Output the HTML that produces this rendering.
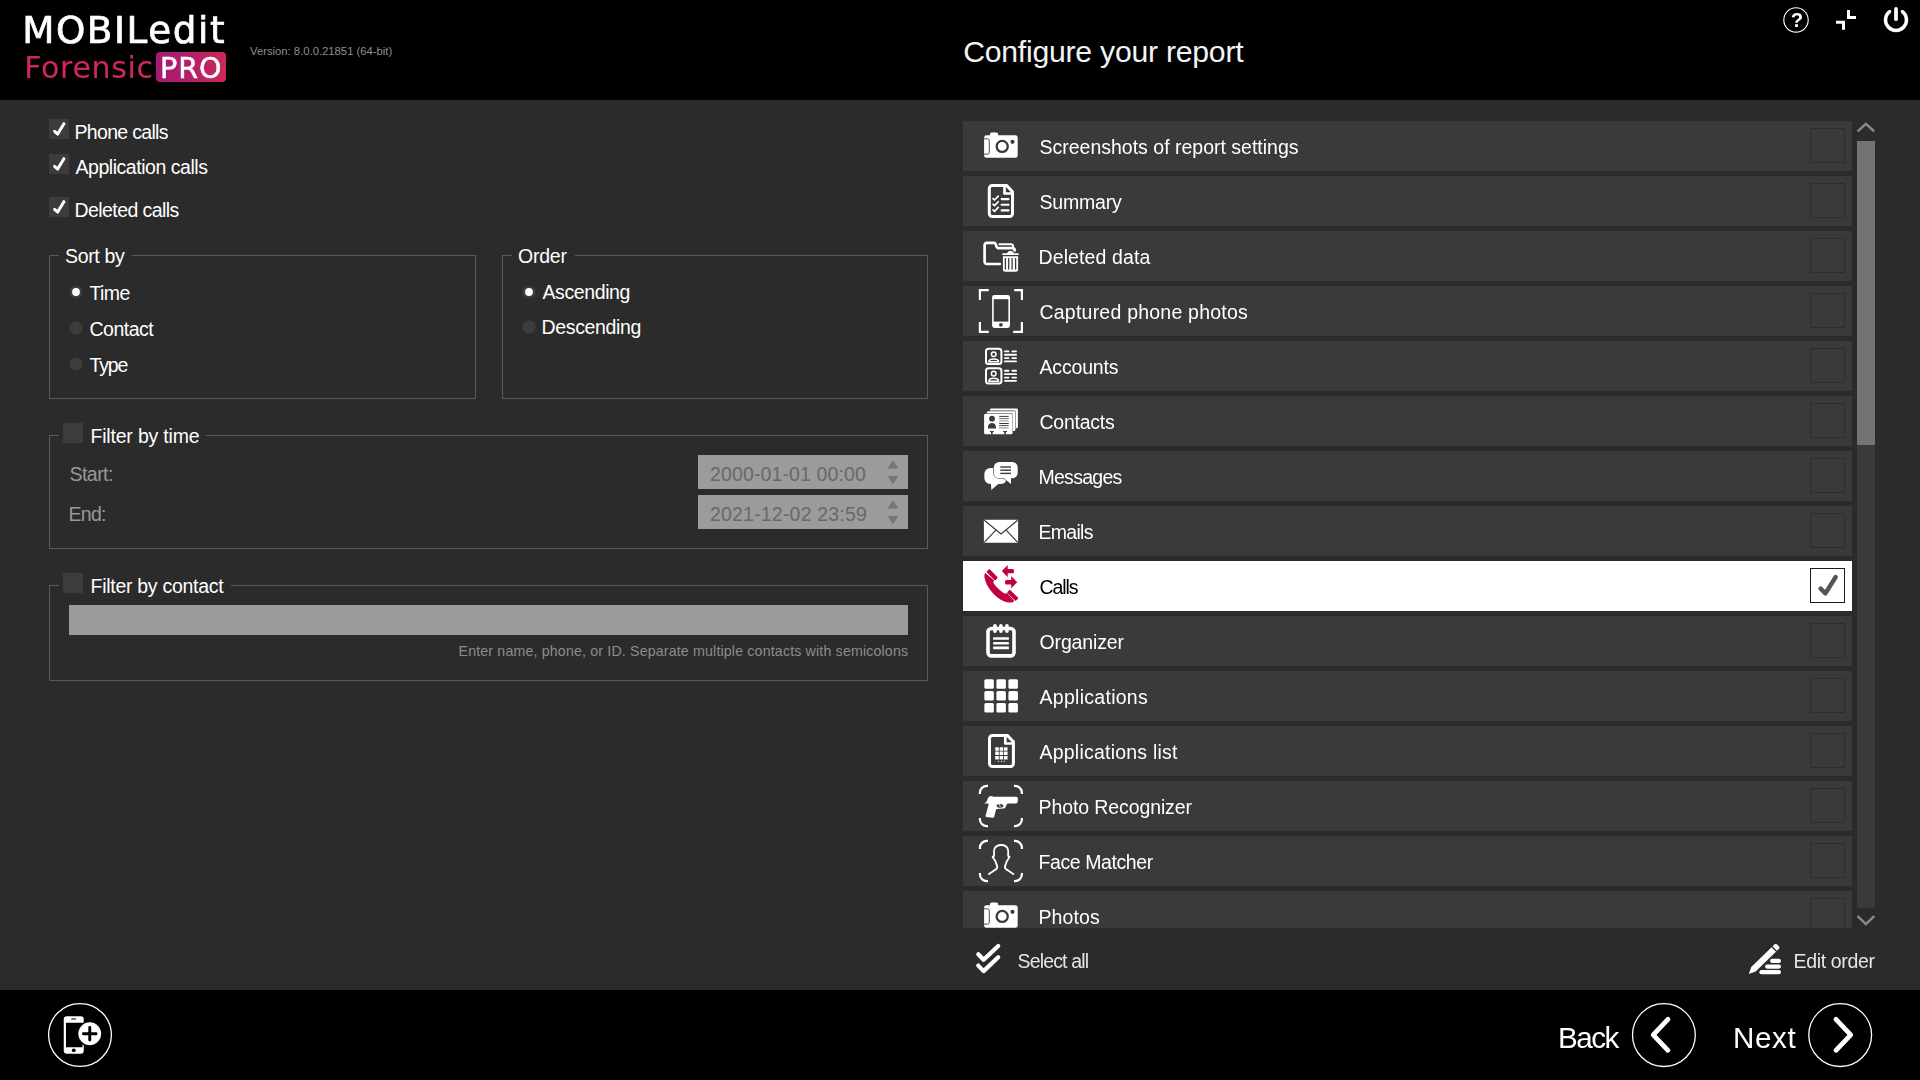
<!DOCTYPE html>
<html lang="en"><head><meta charset="utf-8"><title>MOBILedit Forensic PRO - Configure your report</title>
<style>
html,body{margin:0;padding:0;background:#2b2b2b;overflow:hidden}
body{width:1920px;height:1080px;position:relative;font-family:"Liberation Sans", sans-serif;}
.t{position:absolute;white-space:nowrap;font-family:"Liberation Sans", sans-serif}
#list{position:absolute;left:963px;top:121px;width:889px;height:807px;overflow:hidden;will-change:transform}
#g{position:absolute;left:0;top:0;width:0;height:0;will-change:transform}
.row{position:absolute;left:0;width:889px;height:50px;background:#3a3a3a}
.row.sel{background:#fff}
.cb{position:absolute;left:847px;top:7px;width:33px;height:33px;border:1px solid #2d2d2d}
.row.sel .cb{border-color:#1a1a1a}
svg{overflow:visible}
</style></head><body>
<div style="position:absolute;left:0px;top:0px;width:1920px;height:100px;background:#000"></div><div style="position:absolute;left:0px;top:990px;width:1920px;height:90px;background:#000"></div><div style="position:absolute;left:49px;top:119px;width:20px;height:20px;background:#3c3c3c"></div><svg style="position:absolute;left:49px;top:119px" width="20" height="20" viewBox="0 0 20 20"><path d="M5.6 12.3 L8.7 15.1 L14.9 4.7" fill="none" stroke="#fff" stroke-width="3" stroke-linecap="round" stroke-linejoin="round"/></svg><div style="position:absolute;left:49px;top:154px;width:20px;height:20px;background:#3c3c3c"></div><svg style="position:absolute;left:49px;top:154px" width="20" height="20" viewBox="0 0 20 20"><path d="M5.6 12.3 L8.7 15.1 L14.9 4.7" fill="none" stroke="#fff" stroke-width="3" stroke-linecap="round" stroke-linejoin="round"/></svg><div style="position:absolute;left:49px;top:197px;width:20px;height:20px;background:#3c3c3c"></div><svg style="position:absolute;left:49px;top:197px" width="20" height="20" viewBox="0 0 20 20"><path d="M5.6 12.3 L8.7 15.1 L14.9 4.7" fill="none" stroke="#fff" stroke-width="3" stroke-linecap="round" stroke-linejoin="round"/></svg><div style="position:absolute;left:49px;top:255px;width:1px;height:144px;background:#5a5a5a"></div><div style="position:absolute;left:475px;top:255px;width:1px;height:144px;background:#5a5a5a"></div><div style="position:absolute;left:49px;top:398px;width:427px;height:1px;background:#5a5a5a"></div><div style="position:absolute;left:49px;top:255px;width:10px;height:1px;background:#5a5a5a"></div><div style="position:absolute;left:132px;top:255px;width:344px;height:1px;background:#5a5a5a"></div><div style="position:absolute;left:502px;top:255px;width:1px;height:144px;background:#5a5a5a"></div><div style="position:absolute;left:927px;top:255px;width:1px;height:144px;background:#5a5a5a"></div><div style="position:absolute;left:502px;top:398px;width:426px;height:1px;background:#5a5a5a"></div><div style="position:absolute;left:502px;top:255px;width:10px;height:1px;background:#5a5a5a"></div><div style="position:absolute;left:575px;top:255px;width:353px;height:1px;background:#5a5a5a"></div><svg style="position:absolute;left:68.1px;top:284.1px" width="16" height="16" viewBox="0 0 16 16"><circle cx="8" cy="8" r="6.6" fill="#3c3c3c"/><circle cx="8" cy="8" r="3.9" fill="#fff"/></svg><svg style="position:absolute;left:68.1px;top:320.1px" width="16" height="16" viewBox="0 0 16 16"><circle cx="8" cy="8" r="6.6" fill="#3c3c3c"/></svg><svg style="position:absolute;left:68.1px;top:356.1px" width="16" height="16" viewBox="0 0 16 16"><circle cx="8" cy="8" r="6.6" fill="#3c3c3c"/></svg><svg style="position:absolute;left:521.1px;top:283.6px" width="16" height="16" viewBox="0 0 16 16"><circle cx="8" cy="8" r="6.6" fill="#3c3c3c"/><circle cx="8" cy="8" r="3.9" fill="#fff"/></svg><svg style="position:absolute;left:521.1px;top:318.6px" width="16" height="16" viewBox="0 0 16 16"><circle cx="8" cy="8" r="6.6" fill="#3c3c3c"/></svg><div style="position:absolute;left:49px;top:435px;width:1px;height:114px;background:#5a5a5a"></div><div style="position:absolute;left:927px;top:435px;width:1px;height:114px;background:#5a5a5a"></div><div style="position:absolute;left:49px;top:548px;width:879px;height:1px;background:#5a5a5a"></div><div style="position:absolute;left:49px;top:435px;width:10px;height:1px;background:#5a5a5a"></div><div style="position:absolute;left:206px;top:435px;width:722px;height:1px;background:#5a5a5a"></div><div style="position:absolute;left:63px;top:423px;width:20px;height:20px;background:#3c3c3c"></div><div style="position:absolute;left:698px;top:455px;width:210px;height:34px;background:#9b9b9b"></div><div style="position:absolute;left:698px;top:495px;width:210px;height:34px;background:#9b9b9b"></div><svg style="position:absolute;left:886.5px;top:459.5px" width="12" height="26" viewBox="0 0 12 26"><path d="M6 0.3 L11.5 8.6 L0.5 8.6 Z M6 24.4 L11.4 16 L0.6 16 Z" fill="#757575"/></svg><svg style="position:absolute;left:886.5px;top:499.5px" width="12" height="26" viewBox="0 0 12 26"><path d="M6 0.3 L11.5 8.6 L0.5 8.6 Z M6 24.4 L11.4 16 L0.6 16 Z" fill="#757575"/></svg><div style="position:absolute;left:49px;top:585px;width:1px;height:96px;background:#5a5a5a"></div><div style="position:absolute;left:927px;top:585px;width:1px;height:96px;background:#5a5a5a"></div><div style="position:absolute;left:49px;top:680px;width:879px;height:1px;background:#5a5a5a"></div><div style="position:absolute;left:49px;top:585px;width:10px;height:1px;background:#5a5a5a"></div><div style="position:absolute;left:231px;top:585px;width:697px;height:1px;background:#5a5a5a"></div><div style="position:absolute;left:63px;top:573px;width:20px;height:20px;background:#3c3c3c"></div><div style="position:absolute;left:69px;top:605px;width:839px;height:30px;background:#9b9b9b"></div><div style="position:absolute;left:1857px;top:141px;width:18px;height:767px;background:#3a3a3a"></div><div style="position:absolute;left:1857px;top:141px;width:18px;height:304px;background:#737373"></div><svg style="position:absolute;left:1855px;top:120px" width="22" height="14" viewBox="0 0 22 14"><path d="M2.6 11.4 L10.9 3.9 L19.2 11.4" fill="none" stroke="#8a8a8a" stroke-width="2.5"/></svg><svg style="position:absolute;left:1855px;top:913px" width="22" height="14" viewBox="0 0 22 14"><path d="M2.6 3.2 L10.9 11.1 L19.2 3.2" fill="none" stroke="#8a8a8a" stroke-width="2.5"/></svg>
<div style="position:absolute;left:156px;top:52px;width:70px;height:30px;border-radius:4px;background:linear-gradient(90deg,#a51a74 0%,#b31f6a 50%,#cb295a 100%)"></div>
<svg style="position:absolute;left:1770px;top:0px" width="150" height="45" viewBox="0 0 150 45"><circle cx="26" cy="19.9" r="12.2" fill="none" stroke="#fff" stroke-width="1.1"/><path d="M78.5 10 V17.4 H86 M66 22.2 H73.5 V29.7" fill="none" stroke="#fff" stroke-width="3"/><path d="M119.6 11.6 A10.5 10.5 0 1 0 132.4 11.6" fill="none" stroke="#fff" stroke-width="3.5" stroke-linecap="round"/><path d="M126 8.8 V19.2" fill="none" stroke="#fff" stroke-width="3.7" stroke-linecap="round"/></svg>
<div id="list">
<div class="row" style="top:0px"><i class="cb"></i></div><div class="row" style="top:55px"><i class="cb"></i></div><div class="row" style="top:110px"><i class="cb"></i></div><div class="row" style="top:165px"><i class="cb"></i></div><div class="row" style="top:220px"><i class="cb"></i></div><div class="row" style="top:275px"><i class="cb"></i></div><div class="row" style="top:330px"><i class="cb"></i></div><div class="row" style="top:385px"><i class="cb"></i></div><div class="row sel" style="top:440px"><i class="cb"></i><svg style="position:absolute;left:847px;top:7px" width="35" height="35" viewBox="0 0 35 35"><path d="M10.6 20.6 L15.4 25.4 L25.7 9" fill="none" stroke="#555" stroke-width="4.4" stroke-linecap="round" stroke-linejoin="round"/></svg></div><div class="row" style="top:495px"><i class="cb"></i></div><div class="row" style="top:550px"><i class="cb"></i></div><div class="row" style="top:605px"><i class="cb"></i></div><div class="row" style="top:660px"><i class="cb"></i></div><div class="row" style="top:715px"><i class="cb"></i></div><div class="row" style="top:770px"><i class="cb"></i></div>
<svg style="position:absolute;left:7px;top:0px" width="64" height="50" viewBox="0 0 64 50"><path d="M16.4 14.35 H19.9 V13.4 A1.8 1.8 0 0 1 21.7 11.6 H26.4 A1.8 1.8 0 0 1 28.2 13.4 V14.35 H45.4 A2.3 2.3 0 0 1 47.7 16.65 V34.5 A2.3 2.3 0 0 1 45.4 36.8 H16.4 A2.3 2.3 0 0 1 14.1 34.5 V16.65 A2.3 2.3 0 0 1 16.4 14.35 Z" fill="#fff"/><path d="M14.1 17.8 H17.3 A2 2 0 0 1 19.3 19.8 V31.2 A2 2 0 0 1 17.3 33.2 H14.1" fill="none" stroke="#3a3a3a" stroke-width="0.9"/><circle cx="32.2" cy="25.4" r="5.55" fill="none" stroke="#3a3a3a" stroke-width="2.3"/><circle cx="42.5" cy="20.8" r="2.1" fill="#3a3a3a"/></svg><svg style="position:absolute;left:7px;top:55px" width="64" height="50" viewBox="0 0 64 50"><path d="M22.3 9.4 H36.5 L42.5 15.7 V37.6 A3 3 0 0 1 39.5 40.6 H22.3 A3 3 0 0 1 19.3 37.6 V12.4 A3 3 0 0 1 22.3 9.4 Z" fill="none" stroke="#fff" stroke-width="3" stroke-linejoin="round"/><path d="M34.5 10.5 V17.5 H41.5" fill="none" stroke="#fff" stroke-width="2.7" stroke-linejoin="round"/><path d="M23 22.60 L24.5 24.00 L28.3 20.10" fill="none" stroke="#fff" stroke-width="1.7" stroke-linecap="round" stroke-linejoin="round"/><path d="M31.6 23.10 H38.6" stroke="#fff" stroke-width="2.1" stroke-linecap="round"/><path d="M23 28.25 L24.5 29.65 L28.3 25.75" fill="none" stroke="#fff" stroke-width="1.7" stroke-linecap="round" stroke-linejoin="round"/><path d="M31.6 28.75 H38.6" stroke="#fff" stroke-width="2.1" stroke-linecap="round"/><path d="M23 33.90 L24.5 35.30 L28.3 31.40" fill="none" stroke="#fff" stroke-width="1.7" stroke-linecap="round" stroke-linejoin="round"/><path d="M31.6 34.40 H38.6" stroke="#fff" stroke-width="2.1" stroke-linecap="round"/></svg><svg style="position:absolute;left:7px;top:110px" width="64" height="50" viewBox="0 0 64 50"><path d="M29.8 33 H16.8 A2.2 2.2 0 0 1 14.6 30.8 V14 A2.2 2.2 0 0 1 16.8 11.8 H24.2 C26.6 11.8 25.6 17.1 28.4 17.1 H42.4 A2.3 2.3 0 0 1 44.7 19.4" fill="none" stroke="#fff" stroke-width="2.7" stroke-linecap="round" stroke-linejoin="round"/><path d="M29.4 13.3 H40.8 A2.3 2.3 0 0 1 43.1 15.6 V16.4" fill="none" stroke="#fff" stroke-width="2" stroke-linecap="round"/><path d="M33.1 22.2 H37.2 C37.8 20.6 38.8 20.1 40.5 20.1 C42.2 20.1 43.2 20.6 43.8 22.2 H47.9 A0.9 0.9 0 0 1 48.8 23.1 V24.1 H32.2 V23.1 A0.9 0.9 0 0 1 33.1 22.2 Z" fill="#fff"/><path d="M32.9 25.2 H48.1 V38.2 A2.5 2.5 0 0 1 45.6 40.7 H35.4 A2.5 2.5 0 0 1 32.9 38.2 Z" fill="#fff"/><rect x="34.75" y="26.9" width="1.3" height="11.8" rx="0.6" fill="#3a3a3a"/><rect x="38.05" y="26.9" width="1.3" height="11.8" rx="0.6" fill="#3a3a3a"/><rect x="41.45" y="26.9" width="1.3" height="11.8" rx="0.6" fill="#3a3a3a"/><rect x="44.95" y="26.9" width="1.3" height="11.8" rx="0.6" fill="#3a3a3a"/></svg><svg style="position:absolute;left:7px;top:165px" width="64" height="50" viewBox="0 0 64 50"><path d="M9.9 14.1 V4.1 H18.8 M44.2 4.1 H51.9 V14.1 M51.9 35.9 V45.9 H43.2 M18.8 45.9 H9.9 V35.9" fill="none" stroke="#fff" stroke-width="2.2"/><rect x="22.1" y="9" width="17.9" height="32.9" rx="2.3" fill="#fff"/><rect x="23.7" y="13.2" width="14.7" height="22.4" fill="#3a3a3a"/><circle cx="30.9" cy="38.8" r="1.9" fill="#3a3a3a"/></svg><svg style="position:absolute;left:7px;top:220px" width="64" height="50" viewBox="0 0 64 50"><rect x="16" y="7.70" width="15.4" height="15.4" rx="2.6" fill="none" stroke="#fff" stroke-width="2"/><circle cx="23.7" cy="13.20" r="2.3" fill="none" stroke="#fff" stroke-width="1.5"/><path d="M18.8 20.80 C18.8 16.90 28.6 16.90 28.6 20.80 Z" fill="none" stroke="#fff" stroke-width="1.5" stroke-linejoin="round"/><path d="M34.9 10.30 H38.5 M42.3 10.30 H46.1" stroke="#fff" stroke-width="1.8" stroke-linecap="round"/><path d="M34.9 13.75 H46.1" stroke="#fff" stroke-width="1.8" stroke-linecap="round"/><path d="M34.9 17.10 H38.5 M42.3 17.10 H46.1" stroke="#fff" stroke-width="1.8" stroke-linecap="round"/><path d="M34.9 20.40 H46.1" stroke="#fff" stroke-width="1.8" stroke-linecap="round"/><rect x="16" y="27.15" width="15.4" height="15.4" rx="2.6" fill="none" stroke="#fff" stroke-width="2"/><circle cx="23.7" cy="32.65" r="2.3" fill="none" stroke="#fff" stroke-width="1.5"/><path d="M18.8 40.25 C18.8 36.35 28.6 36.35 28.6 40.25 Z" fill="none" stroke="#fff" stroke-width="1.5" stroke-linejoin="round"/><path d="M34.9 29.75 H38.5 M42.3 29.75 H46.1" stroke="#fff" stroke-width="1.8" stroke-linecap="round"/><path d="M34.9 33.20 H46.1" stroke="#fff" stroke-width="1.8" stroke-linecap="round"/><path d="M34.9 36.55 H38.5 M42.3 36.55 H46.1" stroke="#fff" stroke-width="1.8" stroke-linecap="round"/><path d="M34.9 39.85 H46.1" stroke="#fff" stroke-width="1.8" stroke-linecap="round"/></svg><svg style="position:absolute;left:7px;top:275px" width="64" height="50" viewBox="0 0 64 50"><rect x="19.9" y="12.5" width="28" height="19.7" rx="1.4" fill="#fff"/><rect x="16.5" y="14.6" width="29.3" height="20.8" rx="1.6" fill="#3a3a3a"/><rect x="16.9" y="15.2" width="28.5" height="19.8" rx="1.4" fill="#fff"/><rect x="13.7" y="17.2" width="29.3" height="21.4" rx="1.8" fill="#3a3a3a"/><rect x="14.1" y="17.8" width="28.5" height="20.4" rx="1.5" fill="#fff"/><circle cx="22" cy="22.7" r="2.9" fill="#3a3a3a"/><path d="M18 32.4 V31.2 C18 25.7 25.9 25.7 25.9 31.2 V32.4 Z" fill="#3a3a3a"/><rect x="29.2" y="19.90" width="9.5" height="1" fill="#3a3a3a" opacity="1"/><rect x="29.2" y="22.10" width="9.5" height="1" fill="#3a3a3a" opacity="0.75"/><rect x="29.2" y="24.40" width="9.5" height="1" fill="#3a3a3a" opacity="0.55"/><rect x="29.2" y="27.00" width="9.5" height="1" fill="#3a3a3a" opacity="1"/><rect x="29.2" y="29.10" width="9.5" height="1" fill="#3a3a3a" opacity="0.9"/><rect x="29.2" y="31.40" width="9.5" height="1" fill="#3a3a3a" opacity="0.6"/><path d="M19.9 34.9 H23.8 V35.9 H22.7 V38.3 H21.0 V35.9 H19.9 Z" fill="#3a3a3a"/><path d="M33.1 34.9 H37.0 V35.9 H35.9 V38.3 H34.2 V35.9 H33.1 Z" fill="#3a3a3a"/></svg><svg style="position:absolute;left:7px;top:330px" width="64" height="50" viewBox="0 0 64 50"><path d="M20.3 16.9 H31 A6 6 0 0 1 37 22.9 V27.1 A6 6 0 0 1 31 33.1 H28.2 L21.3 39.1 L21 33.1 H20.3 A6 6 0 0 1 14.35 27.1 V22.9 A6 6 0 0 1 20.3 16.9 Z" fill="#fff"/><path d="M29.3 10.9 H42.2 A5.5 5.5 0 0 1 47.7 16.4 V21.8 A5.5 5.5 0 0 1 42.2 27.3 H41 V33.1 L33.8 27.3 H29.3 A5.5 5.5 0 0 1 23.8 21.8 V16.4 A5.5 5.5 0 0 1 29.3 10.9 Z" fill="#fff" stroke="#3a3a3a" stroke-width="1.1" paint-order="stroke"/><rect x="30.3" y="15.30" width="10.7" height="1.4" fill="#3a3a3a"/><rect x="30.3" y="18.45" width="10.7" height="1.4" fill="#3a3a3a"/><rect x="30.3" y="21.70" width="10.7" height="1.4" fill="#3a3a3a"/></svg><svg style="position:absolute;left:7px;top:385px" width="64" height="50" viewBox="0 0 64 50"><rect x="13.9" y="13.7" width="34.2" height="23.1" rx="0.6" fill="#fff"/><path d="M14.3 14.3 L31 27.9 L47.7 14.3 M14.3 36.3 L25.8 24.1 M47.7 36.3 L36.2 24.1" fill="none" stroke="#3a3a3a" stroke-width="1.2"/></svg><svg style="position:absolute;left:7px;top:440px" width="64" height="50" viewBox="0 0 64 50"><path d="M15.2 12 L24.2 19.4 C22.9 20.6 23.2 22 24.5 23.6 C27 27 30.5 30.2 33.6 32.1 C35 32.9 36 32.7 36.9 31.9 L44 39.5 C44.3 40.2 43.5 40.9 42.3 41.2 C38 42.1 32.5 40.5 27.2 36.2 C20.5 30.7 15.6 23 14.5 16.5 C14.2 14.5 14.5 12.8 15.2 12 Z" fill="#c0003f"/><rect x="0" y="0" width="12.2" height="4.3" rx="0.9" transform="translate(19.4 7.9) rotate(45)" fill="#c0003f"/><rect x="0" y="0" width="12.2" height="4.3" rx="0.9" transform="translate(39.8 28.6) rotate(44)" fill="#c0003f"/><path d="M31.9 10.1 L37.7 3.9 V7.9 H42.4 A1.6 1.6 0 0 1 44 9.5 V10.7 A1.6 1.6 0 0 1 42.4 12.3 H37.7 V16.2 Z" fill="#c0003f"/><path d="M47.2 21.3 L41.2 15 V19 H36.6 A1.6 1.6 0 0 0 35 20.6 V22 A1.6 1.6 0 0 0 36.6 23.6 H41.2 V27.3 Z" fill="#c0003f"/></svg><svg style="position:absolute;left:7px;top:495px" width="64" height="50" viewBox="0 0 64 50"><rect x="18" y="12.45" width="26" height="27.45" rx="3.4" fill="none" stroke="#fff" stroke-width="3.6"/><rect x="23.15" y="8.1" width="3.7" height="8.8" rx="1.85" fill="#fff"/><rect x="29.05" y="8.1" width="3.7" height="8.8" rx="1.85" fill="#fff"/><rect x="35.05" y="8.1" width="3.7" height="8.8" rx="1.85" fill="#fff"/><rect x="23.1" y="21.20" width="15.8" height="2.6" rx="0.5" fill="#fff"/><rect x="23.1" y="25.90" width="15.8" height="2.6" rx="0.5" fill="#fff"/><rect x="23.1" y="30.60" width="15.8" height="2.6" rx="0.5" fill="#fff"/></svg><svg style="position:absolute;left:7px;top:550px" width="64" height="50" viewBox="0 0 64 50"><rect x="14.35" y="8.2" width="9.5" height="9.45" rx="1.5" fill="#fff"/><rect x="26.4" y="8.2" width="9.5" height="9.45" rx="1.5" fill="#fff"/><rect x="38.4" y="8.2" width="9.5" height="9.45" rx="1.5" fill="#fff"/><rect x="14.35" y="20.1" width="9.5" height="9.45" rx="1.5" fill="#fff"/><rect x="26.4" y="20.1" width="9.5" height="9.45" rx="1.5" fill="#fff"/><rect x="38.4" y="20.1" width="9.5" height="9.45" rx="1.5" fill="#fff"/><rect x="14.35" y="32.0" width="9.5" height="9.45" rx="1.5" fill="#fff"/><rect x="26.4" y="32.0" width="9.5" height="9.45" rx="1.5" fill="#fff"/><rect x="38.4" y="32.0" width="9.5" height="9.45" rx="1.5" fill="#fff"/></svg><svg style="position:absolute;left:7px;top:605px" width="64" height="50" viewBox="0 0 64 50"><path d="M22.5 9.4 H37.3 L43.4 15.8 V37.6 A3 3 0 0 1 40.4 40.6 H22.5 A3 3 0 0 1 19.5 37.6 V12.4 A3 3 0 0 1 22.5 9.4 Z" fill="none" stroke="#fff" stroke-width="3" stroke-linejoin="round"/><path d="M35.3 10.5 V17.5 H42.3" fill="none" stroke="#fff" stroke-width="2.7" stroke-linejoin="round"/><rect x="25.2" y="21.2" width="3.6" height="3.5" rx="0.5" fill="#fff"/><rect x="29.6" y="21.2" width="3.6" height="3.5" rx="0.5" fill="#fff"/><rect x="34.0" y="21.2" width="3.6" height="3.5" rx="0.5" fill="#fff"/><rect x="25.2" y="25.6" width="3.6" height="3.5" rx="0.5" fill="#fff"/><rect x="29.6" y="25.6" width="3.6" height="3.5" rx="0.5" fill="#fff"/><rect x="34.0" y="25.6" width="3.6" height="3.5" rx="0.5" fill="#fff"/><rect x="25.2" y="30.0" width="3.6" height="3.5" rx="0.5" fill="#fff"/><rect x="29.6" y="30.0" width="3.6" height="3.5" rx="0.5" fill="#fff"/><rect x="34.0" y="30.0" width="3.6" height="3.5" rx="0.5" fill="#fff"/><rect x="27.90" y="34.8" width="1.2" height="1.2" fill="#fff" opacity="0.8"/><rect x="30.90" y="34.8" width="1.2" height="1.2" fill="#fff" opacity="0.8"/><rect x="33.80" y="34.8" width="1.2" height="1.2" fill="#fff" opacity="0.8"/></svg><svg style="position:absolute;left:7px;top:660px" width="64" height="50" viewBox="0 0 64 50"><path d="M9.9 13 V11.8 A7 7 0 0 1 16.9 4.8 H18 M44 4.8 H44.9 A7 7 0 0 1 51.9 11.8 V13 M51.9 37 V38.2 A7 7 0 0 1 44.9 45.2 H44 M18 45.2 H16.9 A7 7 0 0 1 9.9 38.2 V37" fill="none" stroke="#fff" stroke-width="2.2"/><path d="M19.2 15.9 L20 15 L22.5 15.3 L23 15.8 H45.8 C47.3 15.8 47.9 16.6 47.9 18 V20 C47.9 21.5 46.8 22.6 45.3 22.6 H37.6 C36.6 23.2 36.2 25 35.3 26.6 C34.9 27.4 34.3 27.6 33.5 27.6 L27 27.9 C26.4 28 26.2 28.3 26 29 L24.2 35.8 C24 36.5 23.6 36.8 22.8 36.7 L16.3 35.9 C15.6 35.8 15.4 35.3 15.6 34.6 L18.6 23.6 C18.8 22.9 18.4 22.6 17.6 22.6 L14.1 22.5 C15.5 21.6 16.6 20.6 17 19.4 L17.6 18.6 L17.3 18 L18 17.4 L17.8 16.8 Z" fill="#fff"/><ellipse cx="30" cy="24.8" rx="3.4" ry="1.9" fill="#3a3a3a"/><path d="M29.3 23.2 L30.3 25.9" stroke="#fff" stroke-width="0.9" fill="none"/></svg><svg style="position:absolute;left:7px;top:715px" width="64" height="50" viewBox="0 0 64 50"><path d="M9.9 13 V11.8 A7 7 0 0 1 16.9 4.8 H18 M44 4.8 H44.9 A7 7 0 0 1 51.9 11.8 V13 M51.9 37 V38.2 A7 7 0 0 1 44.9 45.2 H44 M18 45.2 H16.9 A7 7 0 0 1 9.9 38.2 V37" fill="none" stroke="#fff" stroke-width="2.2"/><path d="M18.3 38.4 L25.6 33.6 C27.3 32.6 27.6 31 26.9 29.4 C26.3 28 25.9 27 25.6 25.8 C25.2 24.4 24 23.4 23.3 21.9 C22.6 21 22.5 20.4 23 20.4 C23.8 20.6 24.2 20.2 24.1 18.6 C23.9 16.8 23.7 14.8 24.3 13.3 C25.3 10.6 28.3 9 31.2 9 C34.1 9 37 10.6 37.9 13.3 C38.5 14.8 38.2 16.8 38.1 18.6 C38 20.2 38.3 20.6 39.2 20.4 C39.6 20.4 39.6 21 38.9 21.9 C38.2 23.4 37 24.4 36.6 25.8 C36.3 27 35.9 28 35.3 29.4 C34.6 31 34.9 32.6 36.6 33.6 L44 38.4" fill="none" stroke="#fff" stroke-width="1.8" stroke-linecap="butt" stroke-linejoin="round"/></svg><svg style="position:absolute;left:7px;top:770px" width="64" height="50" viewBox="0 0 64 50"><path d="M16.4 14.35 H19.9 V13.4 A1.8 1.8 0 0 1 21.7 11.6 H26.4 A1.8 1.8 0 0 1 28.2 13.4 V14.35 H45.4 A2.3 2.3 0 0 1 47.7 16.65 V34.5 A2.3 2.3 0 0 1 45.4 36.8 H16.4 A2.3 2.3 0 0 1 14.1 34.5 V16.65 A2.3 2.3 0 0 1 16.4 14.35 Z" fill="#fff"/><path d="M14.1 17.8 H17.3 A2 2 0 0 1 19.3 19.8 V31.2 A2 2 0 0 1 17.3 33.2 H14.1" fill="none" stroke="#3a3a3a" stroke-width="0.9"/><circle cx="32.2" cy="25.4" r="5.55" fill="none" stroke="#3a3a3a" stroke-width="2.3"/><circle cx="42.5" cy="20.8" r="2.1" fill="#3a3a3a"/></svg>
<span class="t" style="left:76.50px;top:17.00px;font-size:19.5px;line-height:19.5px;letter-spacing:-0.002px;color:#fff">Screenshots of report settings</span><span class="t" style="left:76.50px;top:72.00px;font-size:19.5px;line-height:19.5px;letter-spacing:-0.196px;color:#fff">Summary</span><span class="t" style="left:75.50px;top:127.00px;font-size:19.5px;line-height:19.5px;letter-spacing:0.115px;color:#fff">Deleted data</span><span class="t" style="left:76.50px;top:182.00px;font-size:19.5px;line-height:19.5px;letter-spacing:0.221px;color:#fff">Captured phone photos</span><span class="t" style="left:76.50px;top:237.00px;font-size:19.5px;line-height:19.5px;letter-spacing:-0.173px;color:#fff">Accounts</span><span class="t" style="left:76.50px;top:292.00px;font-size:19.5px;line-height:19.5px;letter-spacing:-0.243px;color:#fff">Contacts</span><span class="t" style="left:75.50px;top:347.00px;font-size:19.5px;line-height:19.5px;letter-spacing:-0.732px;color:#fff">Messages</span><span class="t" style="left:75.50px;top:402.00px;font-size:19.5px;line-height:19.5px;letter-spacing:-0.702px;color:#fff">Emails</span><span class="t" style="left:76.50px;top:457.00px;font-size:19.5px;line-height:19.5px;letter-spacing:-1.085px;color:#000">Calls</span><span class="t" style="left:76.50px;top:512.00px;font-size:19.5px;line-height:19.5px;letter-spacing:-0.140px;color:#fff">Organizer</span><span class="t" style="left:76.50px;top:567.00px;font-size:19.5px;line-height:19.5px;letter-spacing:0.282px;color:#fff">Applications</span><span class="t" style="left:76.50px;top:622.00px;font-size:19.5px;line-height:19.5px;letter-spacing:0.220px;color:#fff">Applications list</span><span class="t" style="left:75.50px;top:677.00px;font-size:19.5px;line-height:19.5px;letter-spacing:-0.101px;color:#fff">Photo Recognizer</span><span class="t" style="left:75.50px;top:732.00px;font-size:19.5px;line-height:19.5px;letter-spacing:-0.406px;color:#fff">Face Matcher</span><span class="t" style="left:75.50px;top:787.00px;font-size:19.5px;line-height:19.5px;letter-spacing:0.108px;color:#fff">Photos</span>
</div>
<span class="t" style="left:250.00px;top:46.00px;font-size:11.3px;line-height:11.3px;letter-spacing:-0.011px;color:#8e8e8e">Version: 8.0.0.21851 (64-bit)</span><span class="t" style="left:963.20px;top:37.00px;font-size:30.2px;line-height:30.2px;letter-spacing:-0.243px;color:#f4f4f4">Configure your report</span><span class="t" style="left:74.50px;top:123.00px;font-size:19.5px;line-height:19.5px;letter-spacing:-0.681px;color:#fff">Phone calls</span><span class="t" style="left:75.50px;top:158.00px;font-size:19.5px;line-height:19.5px;letter-spacing:-0.458px;color:#fff">Application calls</span><span class="t" style="left:74.50px;top:201.00px;font-size:19.5px;line-height:19.5px;letter-spacing:-0.574px;color:#fff">Deleted calls</span><span class="t" style="left:65.00px;top:247.00px;font-size:19.5px;line-height:19.5px;letter-spacing:-0.338px;color:#fff">Sort by</span><span class="t" style="left:89.50px;top:284.00px;font-size:19.5px;line-height:19.5px;letter-spacing:-0.588px;color:#fff">Time</span><span class="t" style="left:89.50px;top:320.00px;font-size:19.5px;line-height:19.5px;letter-spacing:-0.506px;color:#fff">Contact</span><span class="t" style="left:89.50px;top:356.00px;font-size:19.5px;line-height:19.5px;letter-spacing:-1.143px;color:#fff">Type</span><span class="t" style="left:518.00px;top:247.00px;font-size:19.5px;line-height:19.5px;letter-spacing:-0.213px;color:#fff">Order</span><span class="t" style="left:542.50px;top:283.00px;font-size:19.5px;line-height:19.5px;letter-spacing:-0.402px;color:#fff">Ascending</span><span class="t" style="left:541.50px;top:318.00px;font-size:19.5px;line-height:19.5px;letter-spacing:-0.349px;color:#fff">Descending</span><span class="t" style="left:90.50px;top:427.00px;font-size:19.5px;line-height:19.5px;letter-spacing:-0.193px;color:#fff">Filter by time</span><span class="t" style="left:69.50px;top:465.00px;font-size:19.5px;line-height:19.5px;letter-spacing:-0.536px;color:#999">Start:</span><span class="t" style="left:68.50px;top:505.00px;font-size:19.5px;line-height:19.5px;letter-spacing:-0.732px;color:#999">End:</span><span class="t" style="left:90.50px;top:577.00px;font-size:19.5px;line-height:19.5px;letter-spacing:-0.279px;color:#fff">Filter by contact</span><span class="t" style="left:710.00px;top:465.00px;font-size:19.5px;line-height:19.5px;letter-spacing:0.126px;color:#696969">2000-01-01 00:00</span><span class="t" style="left:710.00px;top:505.00px;font-size:19.5px;line-height:19.5px;letter-spacing:0.192px;color:#696969">2021-12-02 23:59</span><span class="t" style="left:458.50px;top:644.00px;font-size:14.2px;line-height:14.2px;letter-spacing:0.166px;color:#8c8c8c">Enter name, phone, or ID. Separate multiple contacts with semicolons</span>
<div id="g"><span class="t" style="left:22.20px;top:12.00px;font-size:37.3px;line-height:37.3px;letter-spacing:1.571px;color:#fff;font-family:'DejaVu Sans','Liberation Sans',sans-serif;-webkit-text-stroke:0.7px #fff">MOBILedit</span><span class="t" style="left:24.20px;top:53.00px;font-size:30px;line-height:30px;letter-spacing:0.678px;color:#d1275f;font-family:'DejaVu Sans','Liberation Sans',sans-serif;-webkit-text-stroke:0.1px #d1275f">Forensic</span><span class="t" style="left:160.00px;top:54.00px;font-size:28.6px;line-height:28.6px;letter-spacing:0.945px;color:#fff;font-family:'DejaVu Sans','Liberation Sans',sans-serif;-webkit-text-stroke:0.5px #fff">PRO</span><span class="t" style="left:1790.70px;top:10.00px;font-size:20.3px;line-height:20.3px;letter-spacing:0.000px;color:#fff;font-weight:700">?</span><span class="t" style="left:1017.50px;top:952.00px;font-size:19.5px;line-height:19.5px;letter-spacing:-0.838px;color:#e6e6e6">Select all</span><span class="t" style="left:1793.50px;top:952.00px;font-size:19.5px;line-height:19.5px;letter-spacing:-0.339px;color:#e6e6e6">Edit order</span><span class="t" style="left:1558.00px;top:1023.00px;font-size:29.6px;line-height:29.6px;letter-spacing:-1.498px;color:#fff">Back</span><span class="t" style="left:1733.00px;top:1023.00px;font-size:29.6px;line-height:29.6px;letter-spacing:0.624px;color:#fff">Next</span></div>
<svg style="position:absolute;left:965px;top:935px" width="60" height="50" viewBox="0 0 60 50"><path d="M13.3 19.3 L18.6 24.8 L33.2 11 M13.3 30.6 L18.6 36.1 L33.2 22.3" fill="none" stroke="#fff" stroke-width="4.2" stroke-linecap="round" stroke-linejoin="round"/></svg><svg style="position:absolute;left:1740px;top:935px" width="60" height="50" viewBox="0 0 60 50"><rect x="30.1" y="23.8" width="10.9" height="4.3" rx="2.15" fill="#fff"/><rect x="25" y="29.4" width="16.0" height="4.3" rx="2.15" fill="#fff"/><rect x="19.4" y="35" width="21.6" height="4.3" rx="2.15" fill="#fff"/><g transform="translate(8.8 38.9) rotate(-44.4)"><path d="M0 0 L6.5 -3.15 H35 V3.15 H6.5 Z M36.3 -3.15 H39.2 A1.6 1.6 0 0 1 40.8 -1.55 V1.55 A1.6 1.6 0 0 1 39.2 3.15 H36.3 Z" fill="#fff" stroke="#2b2b2b" stroke-width="1.6" paint-order="stroke"/></g></svg><svg style="position:absolute;left:1620px;top:995px" width="270" height="80" viewBox="0 0 270 80"><circle cx="43.9" cy="40.1" r="31.4" fill="none" stroke="#fff" stroke-width="1.3"/><path d="M47.9 24.3 L33.2 39.8 L47.9 55.3" fill="none" stroke="#fff" stroke-width="4.8" stroke-linecap="round" stroke-linejoin="round"/><circle cx="220.2" cy="40.1" r="31.4" fill="none" stroke="#fff" stroke-width="1.3"/><path d="M216 24.3 L230.7 39.8 L216 55.3" fill="none" stroke="#fff" stroke-width="4.8" stroke-linecap="round" stroke-linejoin="round"/></svg><svg style="position:absolute;left:40px;top:995px" width="80" height="80" viewBox="0 0 80 80"><circle cx="40" cy="40" r="31.4" fill="none" stroke="#fff" stroke-width="1.3"/><rect x="23.75" y="21.25" width="20" height="37.5" rx="3" fill="#fff"/><rect x="26" y="27.75" width="16.5" height="24.5" fill="#000"/><rect x="31.2" y="23.6" width="4.9" height="1" rx="0.5" fill="#000"/><circle cx="33.75" cy="55.3" r="1.9" fill="#000"/><circle cx="49.75" cy="38.75" r="13" fill="#000"/><circle cx="49.75" cy="38.75" r="11.4" fill="#fff"/><path d="M43.4 38.75 H56.1 M49.75 32.4 V45.1" stroke="#000" stroke-width="2.9" stroke-linecap="round"/></svg>
</body></html>
